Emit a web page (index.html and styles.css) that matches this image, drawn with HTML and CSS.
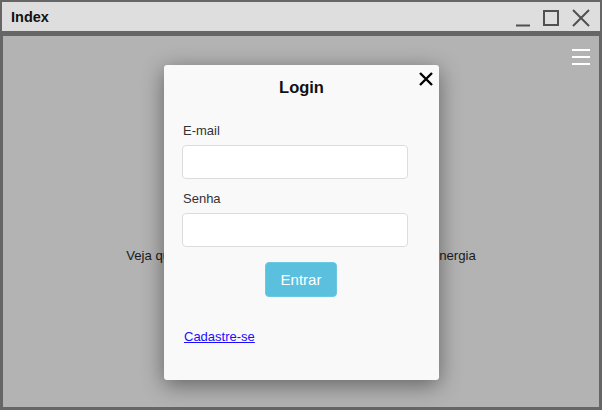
FILE: index.html
```html
<!DOCTYPE html>
<html lang="pt-BR">
<head>
<meta charset="utf-8">
<title>Index</title>
<link rel="stylesheet" href="styles.css">
</head>
<body>
<div class="window">
  <div class="titlebar">
    <span class="title">Index</span>
    <div class="controls">
      <svg class="ctl" width="16" height="18" viewBox="0 0 16 18"><path d="M1 16.5H15" stroke="#505050" stroke-width="2"/></svg>
      <svg class="ctl" width="18" height="18" viewBox="0 0 18 18"><rect x="2" y="2" width="14" height="14" fill="none" stroke="#505050" stroke-width="2"/></svg>
      <svg class="ctl" width="20" height="20" viewBox="0 0 20 20"><path d="M2 2L18 18M18 2L2 18" stroke="#505050" stroke-width="2"/></svg>
    </div>
  </div>
  <div class="content">
    <div class="menu"><span></span><span></span><span></span></div>
    <p class="tagline">Veja quanto seus aparelhos elétricos consomem de energia</p>
    <div class="modal">
      <svg class="close" width="16" height="16" viewBox="0 0 16 16"><path d="M2 2L14 14M14 2L2 14" stroke="#000" stroke-width="2.4"/></svg>
      <h1 class="modal-title">Login</h1>
      <label class="label">E-mail</label>
      <div class="input"></div>
      <label class="label">Senha</label>
      <div class="input"></div>
      <div class="actions"><button class="btn">Entrar</button></div>
      <a class="link" href="#">Cadastre-se</a>
    </div>
  </div>
</div>
</body>
</html>
```
FILE: styles.css
```css
html, body { margin: 0; padding: 0; }
body {
  background: #666666;
  width: 602px;
  height: 410px;
  overflow: hidden;
  font-family: "Liberation Sans", Arial, sans-serif;
}
.window {
  display: flex;
  flex-direction: column;
  padding: 2px 2px 3px 2px;
  height: 410px;
  box-sizing: border-box;
}
.titlebar {
  height: 29px;
  background: #dedede;
  display: flex;
  align-items: center;
  justify-content: space-between;
  padding: 0 9px 0 9px;
}
.title {
  font-weight: bold;
  font-size: 14.5px;
  color: #111;
  margin-top: 1px;
}
.controls {
  display: flex;
  align-items: center;
  gap: 11px;
  margin-top: 2px;
}
.content {
  position: relative;
  margin: 5px 1px 0 1px;
  flex: 1;
  background: #b3b3b3;
  display: flex;
  justify-content: center;
}
.menu {
  position: absolute;
  right: 9px;
  top: 13px;
  display: flex;
  flex-direction: column;
  gap: 5px;
}
.menu span {
  display: block;
  width: 18px;
  height: 2px;
  background: #fff;
}
.tagline {
  margin: 212px 0 0 0;
  font-size: 13.2px;
  color: #1a1a1a;
}
.modal {
  position: absolute;
  left: 161px;
  top: 29px;
  width: 275px;
  height: 315px;
  box-sizing: border-box;
  background: #f9f9f9;
  border-radius: 3px;
  box-shadow: 0 5px 22px rgba(0,0,0,0.45);
  padding: 13px 31px 0 18px;
  display: flex;
  flex-direction: column;
}
.close {
  position: absolute;
  right: 5px;
  top: 6px;
}
.modal-title {
  margin: 0 0 26px 0;
  text-align: center;
  font-size: 16.5px;
  font-weight: bold;
  color: #111;
  padding-left: 13px;
}
.label {
  font-size: 13px;
  color: #333;
  margin: 0 0 7px 1px;
}
.input {
  height: 32px;
  background: #fff;
  border: 1px solid #dcdcdc;
  border-radius: 4px;
  margin-bottom: 12px;
}
.actions {
  display: flex;
  justify-content: center;
  margin-top: 3px;
  padding-left: 12px;
}
.btn {
  width: 72px;
  height: 35px;
  background: #5bc0de;
  border: 1px solid #6cc8e2;
  border-radius: 4px;
  color: #fff;
  font-family: "Liberation Sans", Arial, sans-serif;
  font-size: 15px;
  padding: 0;
}
.link {
  margin: 32px 0 0 2px;
  font-size: 13px;
  color: #1a0dff;
  text-decoration: underline;
  align-self: flex-start;
}
```
